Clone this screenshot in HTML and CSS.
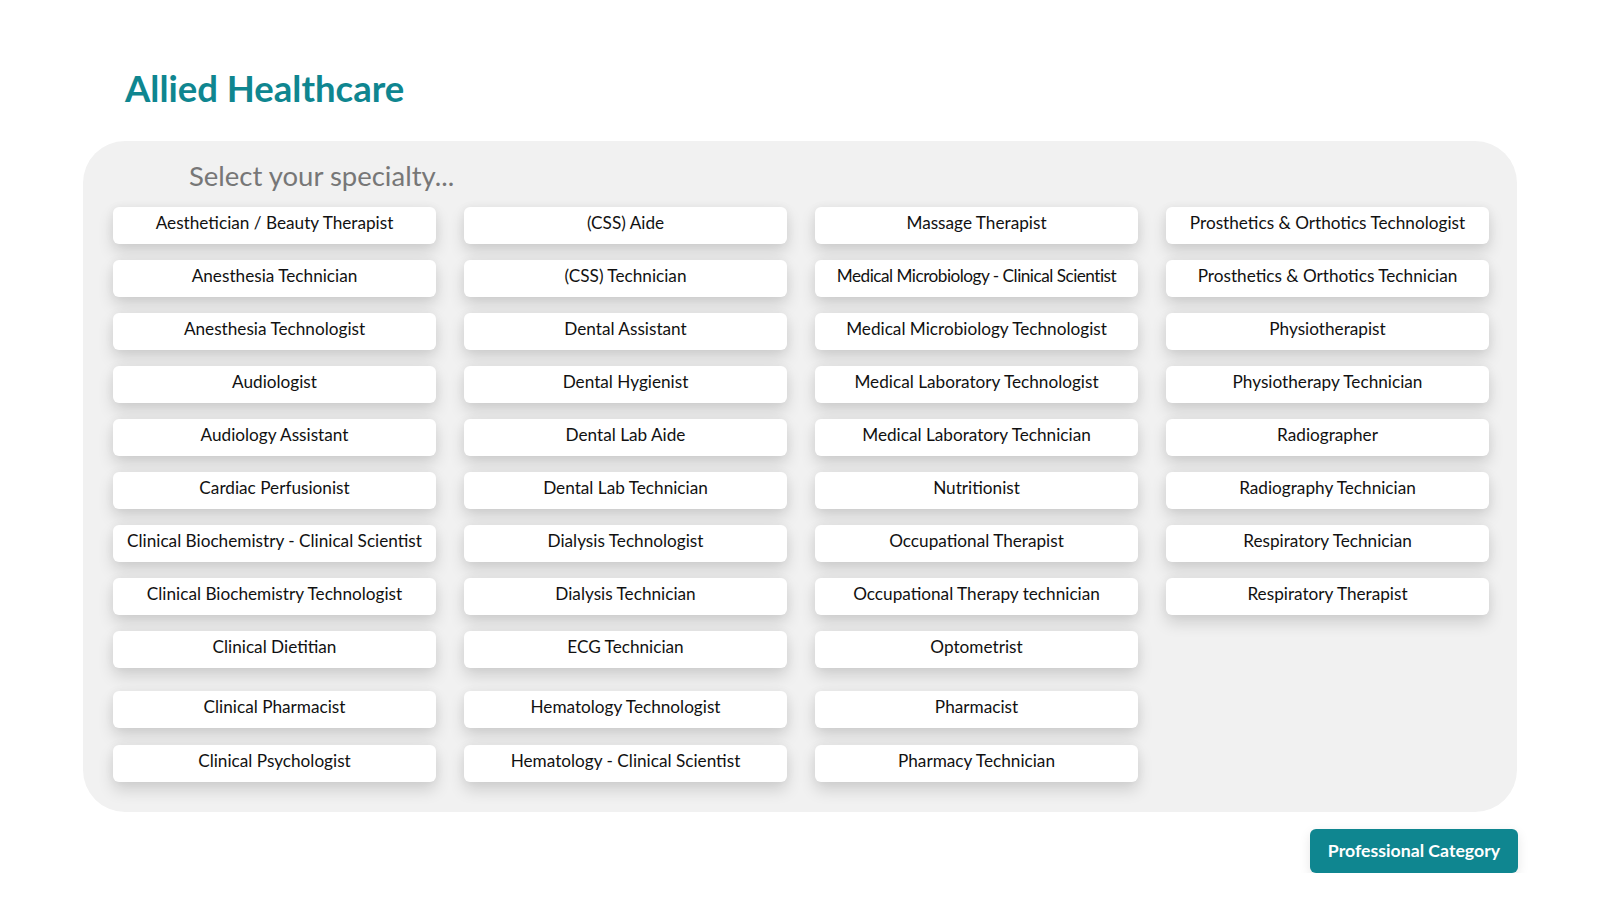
FILE: index.html
```html
<!DOCTYPE html>
<html lang="en">
<head>
  <meta charset="UTF-8">
  <title>Allied Healthcare</title>
  <link rel="stylesheet" href="styles.css">
</head>
<body>

  <main class="page">
    <h1 class="page-title">Allied Healthcare</h1>

    <!-- Specialty picker -->
    <section class="specialty-panel">
      <h2 class="panel-prompt">Select your specialty...</h2>

      <div class="specialty-grid">
        <button class="chip">Aesthetician / Beauty Therapist</button>
        <button class="chip">Anesthesia Technician</button>
        <button class="chip">Anesthesia Technologist</button>
        <button class="chip">Audiologist</button>
        <button class="chip">Audiology Assistant</button>
        <button class="chip">Cardiac Perfusionist</button>
        <button class="chip">Clinical Biochemistry - Clinical Scientist</button>
        <button class="chip">Clinical Biochemistry Technologist</button>
        <button class="chip">Clinical Dietitian</button>
        <button class="chip">Clinical Pharmacist</button>
        <button class="chip">Clinical Psychologist</button>

        <button class="chip">(CSS) Aide</button>
        <button class="chip">(CSS) Technician</button>
        <button class="chip">Dental Assistant</button>
        <button class="chip">Dental Hygienist</button>
        <button class="chip">Dental Lab Aide</button>
        <button class="chip">Dental Lab Technician</button>
        <button class="chip">Dialysis Technologist</button>
        <button class="chip">Dialysis Technician</button>
        <button class="chip">ECG Technician</button>
        <button class="chip">Hematology Technologist</button>
        <button class="chip">Hematology - Clinical Scientist</button>

        <button class="chip">Massage Therapist</button>
        <button class="chip chip-tight">Medical Microbiology - Clinical Scientist</button>
        <button class="chip">Medical Microbiology Technologist</button>
        <button class="chip">Medical Laboratory Technologist</button>
        <button class="chip">Medical Laboratory Technician</button>
        <button class="chip">Nutritionist</button>
        <button class="chip">Occupational Therapist</button>
        <button class="chip">Occupational Therapy technician</button>
        <button class="chip">Optometrist</button>
        <button class="chip">Pharmacist</button>
        <button class="chip">Pharmacy Technician</button>

        <button class="chip">Prosthetics &amp; Orthotics Technologist</button>
        <button class="chip">Prosthetics &amp; Orthotics Technician</button>
        <button class="chip">Physiotherapist</button>
        <button class="chip">Physiotherapy Technician</button>
        <button class="chip">Radiographer</button>
        <button class="chip">Radiography Technician</button>
        <button class="chip">Respiratory Technician</button>
        <button class="chip">Respiratory Therapist</button>
      </div>
    </section>

    <div class="page-actions">
      <button class="category-btn">Professional Category</button>
    </div>
  </main>

</body>
</html>
```

FILE: styles.css
```css
* { box-sizing: border-box; }

body {
  margin: 0;
  font-family: Lato, 'Open Sans', sans-serif;
  background: #ffffff;
  color: #111;
}

.page {
  padding: 0 83px;
}

.page-title {
  margin: 67px 0 30px 42px;
  font-size: 36.5px;
  font-weight: 700;
  line-height: 1.2;
  color: #0f8690;
}

/* Specialty panel */
.specialty-panel {
  background: #f1f1f1;
  border-radius: 42px;
  padding: 18px 28px 30px 30px;
}

.panel-prompt {
  margin: 0 0 15px 76px;
  font-size: 27.5px;
  font-weight: 400;
  line-height: 1.2;
  color: #777;
}

.specialty-grid {
  display: grid;
  grid-template-columns: repeat(4, 1fr);
  grid-template-rows: repeat(9, 37px) 44px 38px;
  grid-auto-flow: column;
  column-gap: 28px;
  row-gap: 16px;
}

.chip {
  height: 37px;
  padding: 0 8px 5px;
  border: none;
  border-radius: 6px;
  background: #fff;
  box-shadow: 0 8px 16px rgba(0, 0, 0, 0.14), 0 0 10px rgba(0, 0, 0, 0.05);
  font-family: inherit;
  font-size: 17.2px;
  color: #111;
  white-space: nowrap;
  cursor: pointer;
}

.chip:nth-child(11n+10),
.chip:nth-child(11n+11) {
  align-self: end;
}

.chip-tight {
  letter-spacing: -0.5px;
}

.chip:hover {
  background: #f8fcfc;
}

/* Bottom action */
.page-actions {
  display: flex;
  justify-content: flex-end;
  margin-top: 17px;
  margin-right: -1px;
}

.category-btn {
  width: 208px;
  height: 44px;
  border: none;
  border-radius: 6px;
  background: #0f8690;
  color: #fff;
  font-family: inherit;
  font-size: 17.7px;
  font-weight: 700;
  box-shadow: 0 4px 12px rgba(0, 0, 0, 0.1);
  cursor: pointer;
}
```
